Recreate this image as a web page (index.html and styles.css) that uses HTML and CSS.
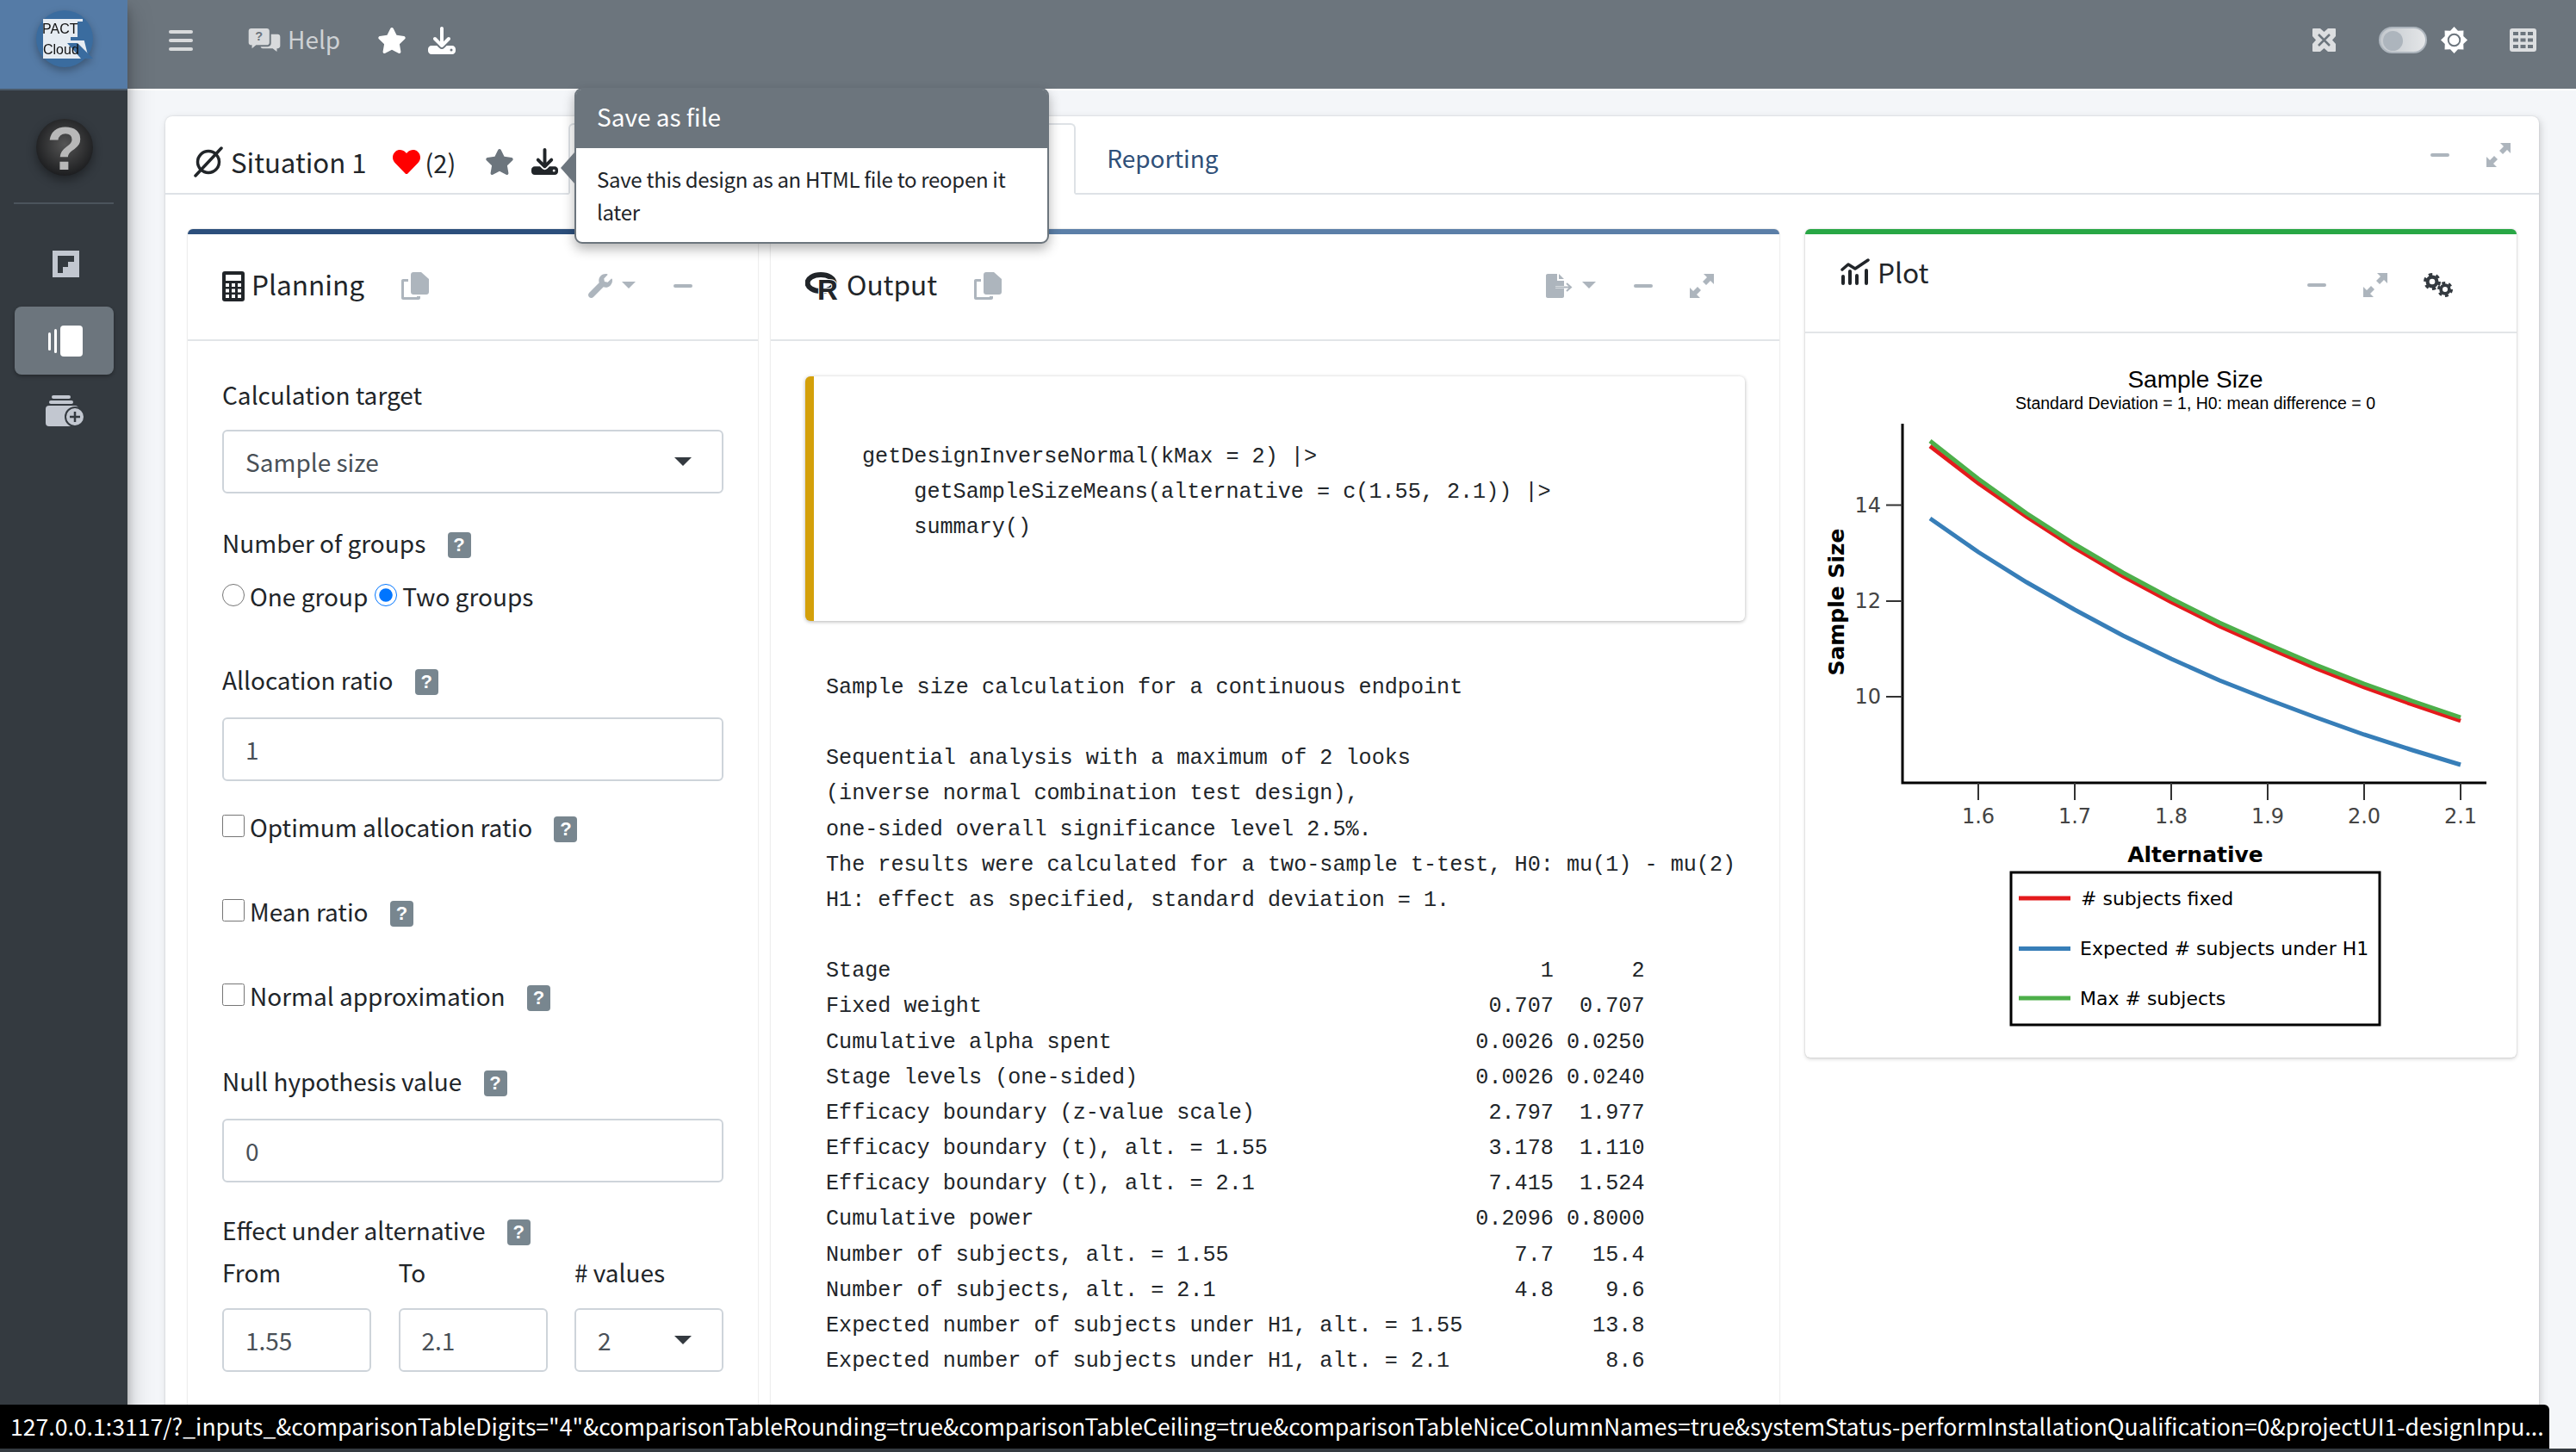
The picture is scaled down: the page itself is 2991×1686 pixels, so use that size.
FILE: index.html
```html
<!DOCTYPE html>
<html>
<head>
    <meta charset="UTF-8">
    <title>PACT Cloud</title>
    <link rel="stylesheet" href="styles.css">
</head>

<body>
    <!-- shared icons -->
    <svg class="sprite" xmlns="http://www.w3.org/2000/svg">
        <symbol id="i-star" viewBox="0 0 576 512"><path d="M259.3 17.8L194 150.2 47.9 171.5c-26.2 3.8-36.7 36.1-17.7 54.6l105.7 103-25 145.5c-4.5 26.3 23.2 46 46.4 33.7L288 439.6l130.7 68.7c23.2 12.2 50.9-7.4 46.4-33.7l-25-145.5 105.7-103c19-18.5 8.5-50.8-17.7-54.6L382 150.2 316.7 17.8c-11.7-23.6-45.6-23.9-57.4 0z"/></symbol>
        <symbol id="i-download" viewBox="0 0 512 512"><path d="M288 32c0-17.7-14.3-32-32-32s-32 14.3-32 32V274.7l-73.4-73.4c-12.5-12.5-32.8-12.5-45.3 0s-12.5 32.8 0 45.3l128 128c12.5 12.5 32.8 12.5 45.3 0l128-128c12.5-12.5 12.5-32.8 0-45.3s-32.8-12.5-45.3 0L288 274.7V32zM64 352c-35.3 0-64 28.7-64 64v32c0 35.3 28.7 64 64 64H448c35.3 0 64-28.7 64-64V416c0-35.3-28.7-64-64-64H346.5l-45.3 45.3c-25 25-65.5 25-90.5 0L165.5 352H64zm368 56a24 24 0 1 1 0 48 24 24 0 1 1 0-48z"/></symbol>
        <symbol id="i-expand" viewBox="0 0 28 28"><path d="M16 0h12v12l-4-4-5 5-4-4 5-5zM0 28V16l4 4 5-5 4 4-5 5 4 4z"/></symbol>
        <symbol id="i-copy" viewBox="0 0 32 32"><path d="M11 3c0-1.700 1.300-3 3-3h9l9 8v15c0 1.700-1.300 3-3 3H14c-1.700 0-3-1.300-3-3z"/><path d="M8 8v3H3v18h15v-1h4v2c0 1.100-.9 2-2 2H2c-1.100 0-2-.9-2-2V10c0-1.100.9-2 2-2z"/></symbol>
        <symbol id="i-cog" viewBox="0 0 24 24"><circle cx="12" cy="12" r="6.5" fill="none" stroke="currentColor" stroke-width="5"/><circle cx="12" cy="12" r="10" fill="none" stroke="currentColor" stroke-width="4" stroke-dasharray="5.2 5.27"/></symbol>
    </svg>

    <div class="app">
        <!-- sidebar -->
        <aside class="sidebar">
            <div class="brand">
                <svg class="logo" viewBox="0 0 66 90" width="66" height="90">
                    <circle cx="33" cy="45" r="33" fill="#3a6c9f"/>
                    <path d="M8 22h46v18l7 28H8z" fill="#e6ecf2"/>
                    <path d="M36 50h12l18 18H52zM48 25h9v22H40v-4h8z" fill="#3a6c9f"/>
                    <text x="7" y="39" class="logo-text">PACT</text>
                    <text x="8" y="63" class="logo-text">Cloud</text>
                </svg>
            </div>
            <div class="user-panel">
                <svg viewBox="0 0 68 90" width="68" height="90">
                    <defs>
                        <radialGradient id="ball" cx="50%" cy="45%" r="55%">
                            <stop offset="0" stop-color="#555"/>
                            <stop offset="1" stop-color="#1d1e20"/>
                        </radialGradient>
                    </defs>
                    <ellipse cx="34" cy="45" rx="33" ry="33" fill="url(#ball)"/>
                    <text x="35" y="71" class="ball-text">?</text>
                </svg>
            </div>
            <nav class="side-nav">
                <a class="side-item">
                    <svg viewBox="0 0 31 31" width="31" height="31"><path d="M0 0h31v31H0z" fill="#c2c7d0"/><path d="M6 6h19v7h-7v6h-6v7H6z" fill="#343a40"/></svg>
                </a>
                <a class="side-item active">
                    <svg viewBox="0 0 40 36" width="40" height="36"><rect x="14" y="0" width="26" height="36" rx="4" fill="#fff"/><rect x="7" y="4" width="3" height="28" rx="1.5" fill="#fff"/><rect x="0" y="8" width="3" height="21" rx="1.5" fill="#fff"/></svg>
                </a>
                <a class="side-item">
                    <svg viewBox="0 0 46 36" width="46" height="36">
                        <rect x="7" y="0" width="22" height="4" rx="2" fill="#c2c7d0"/>
                        <rect x="4" y="6" width="28" height="4" rx="2" fill="#c2c7d0"/>
                        <rect x="0" y="12" width="38" height="24" rx="4" fill="#c2c7d0"/>
                        <circle cx="34" cy="25" r="11" fill="#c2c7d0" stroke="#343a40" stroke-width="2"/>
                        <path d="M34 19v12M28 25h12" stroke="#343a40" stroke-width="2.5"/>
                    </svg>
                </a>
            </nav>
        </aside>

        <div class="main">
            <!-- top bar -->
            <header class="topbar">
                <span class="hamburger"><i></i><i></i><i></i></span>
                <svg class="help-icon" viewBox="0 0 38 28" width="38" height="27">
                    <path d="M3 0h19c1.700 0 3 1.300 3 3v14c0 1.700-1.300 3-3 3H9l-5 4v-4H3c-1.700 0-3-1.300-3-3V3c0-1.700 1.300-3 3-3z" fill="#d8dadc"/>
                    <path d="M27 7h8c1.700 0 3 1.300 3 3v11c0 1.700-1.300 3-3 3h-1v4l-5-4H17c-1.700 0-2.500-1-2.500-2H23c2.500 0 4-1.500 4-4z" fill="#d8dadc"/>
                    <text x="12.5" y="15" class="help-q">?</text>
                </svg>
                <span class="help-text">Help</span>
                <svg class="top-star"><use href="#i-star"/></svg>
                <svg class="top-download"><use href="#i-download"/></svg>

                <span class="top-right">
                    <svg class="top-expand" viewBox="0 0 27 27" width="27" height="27">
                        <rect width="27" height="27" rx="1" fill="#dcdee0"/>
                        <path d="M7 7l13 13M20 7L7 20" stroke="#6c757d" stroke-width="2.5"/>
                        <path d="M0 9l4 4.500-4 4.500zM27 9l-4 4.500 4 4.500zM9 0l4.500 4L18 0zM9 27l4.500-4 4.500 4z" fill="#6c757d"/>
                    </svg>
                    <span class="toggle"><i></i></span>
                    <svg class="top-sun" viewBox="0 0 32 32" width="31" height="31">
                        <polygon points="16,0 20.6,4.9 27.3,4.7 27.1,11.4 32,16 27.1,20.6 27.3,27.3 20.6,27.1 16,32 11.4,27.1 4.7,27.3 4.9,20.6 0,16 4.9,11.4 4.7,4.7 11.4,4.9" fill="#fff"/>
                        <circle cx="16" cy="16" r="7" fill="#fff" stroke="#6c757d" stroke-width="2"/>
                    </svg>
                    <svg class="top-grid" viewBox="0 0 31 27" width="31" height="27">
                        <rect width="31" height="27" rx="3" fill="#dcdee0"/>
                        <path d="M4 4h6v4H4zM12.500 4h6v4h-6zM21 4h6v4h-6zM4 11.500h6v4H4zM12.500 11.500h6v4h-6zM21 11.500h6v4h-6zM4 19h6v4H4zM12.500 19h6v4h-6zM21 19h6v4h-6z" fill="#6c757d"/>
                    </svg>
                </span>
            </header>

            <div class="content">
                <section class="card">
                    <div class="card-header">
                        <div class="card-lead">
                            <svg class="empty-set" viewBox="0 0 34 36" width="34" height="36">
                                <circle cx="17" cy="18" r="12.5" fill="none" stroke="#212529" stroke-width="3.5"/>
                                <path d="M2 34L32 2" stroke="#212529" stroke-width="3.5" stroke-linecap="round"/>
                            </svg>
                            <span class="card-title">Situation 1</span>
                            <svg class="heart" viewBox="0 0 512 512"><path d="M462.3 62.6C407.5 15.9 326 24.3 275.7 76.2L256 96.5l-19.7-20.3C186.1 24.3 104.5 15.9 49.7 62.6c-62.8 53.6-66.1 149.8-9.9 207.9l193.5 199.8c12.5 12.9 32.8 12.9 45.3 0l193.5-199.8c56.3-58.1 53-154.3-9.8-207.9z"/></svg>
                            <span class="likes">(2)</span>
                            <svg class="card-star"><use href="#i-star"/></svg>
                            <svg class="card-download"><use href="#i-download"/></svg>
                        </div>
                        <div class="tabs">
                            <span class="tab active"></span>
                            <span class="tab">Reporting</span>
                        </div>
                        <span class="tool-minus"></span>
                        <svg class="tool-expand"><use href="#i-expand"/></svg>
                    </div>

                    <div class="card-body">
                        <!-- planning box -->
                        <section class="box box-planning">
                            <div class="box-header">
                                <svg class="head-icon" viewBox="0 0 26 35" width="26" height="35">
                                    <rect width="26" height="35" rx="3" fill="#212529"/>
                                    <rect x="4" y="4" width="18" height="7" fill="#fff"/>
                                    <path d="M4 14h4v4H4zM11 14h4v4h-4zM18 14h4v4h-4zM4 20.500h4v4H4zM11 20.500h4v4h-4zM18 20.500h4v4h-4zM4 27h4v4H4zM11 27h4v4h-4zM18 27h4v4h-4z" fill="#fff"/>
                                </svg>
                                <span class="box-title">Planning</span>
                                <svg class="tool-copy"><use href="#i-copy"/></svg>
                                <span class="tools">
                                    <svg class="tool-wrench" viewBox="0 0 512 512"><path d="M507.73 109.1c-2.24-9.03-13.54-12.09-20.12-5.51l-74.36 74.36-67.88-11.31-11.31-67.88 74.36-74.36c6.62-6.62 3.43-17.9-5.66-20.16-47.38-11.74-99.55.91-136.58 37.93-39.64 39.64-50.55 97.1-34.05 147.2L18.74 402.76c-24.99 24.99-24.99 65.51 0 90.5 24.99 24.99 65.51 24.99 90.5 0l213.21-213.21c50.12 16.71 107.47 5.68 147.37-34.22 37.07-37.07 49.7-89.32 37.91-136.73z"/></svg>
                                    <span class="tool-caret"></span>
                                    <span class="tool-minus"></span>
                                </span>
                            </div>
                            <div class="box-body form">
                                <label class="field-label">Calculation target</label>
                                <div class="select-box">Sample size<span class="select-caret"></span></div>

                                <label class="field-label gap-m">Number of groups <span class="hint">?</span></label>
                                <div class="radio-row">
                                    <label><input type="radio" name="groups">One group</label>
                                    <label><input type="radio" name="groups" checked>Two groups</label>
                                </div>

                                <label class="field-label input-label gap-a">Allocation ratio <span class="hint">?</span></label>
                                <input class="text-input" type="text" value="1">

                                <label class="check-row gap-o"><input type="checkbox">Optimum allocation ratio <span class="hint">?</span></label>
                                <label class="check-row gap-c"><input type="checkbox">Mean ratio <span class="hint">?</span></label>
                                <label class="check-row gap-c"><input type="checkbox">Normal approximation <span class="hint">?</span></label>

                                <label class="field-label input-label gap-l">Null hypothesis value <span class="hint">?</span></label>
                                <input class="text-input" type="text" value="0">

                                <label class="field-label gap-e tight">Effect under alternative <span class="hint">?</span></label>
                                <div class="range-row">
                                    <div class="range-col">
                                        <label>From</label>
                                        <input class="text-input" type="text" value="1.55">
                                    </div>
                                    <div class="range-col">
                                        <label>To</label>
                                        <input class="text-input" type="text" value="2.1">
                                    </div>
                                    <div class="range-col">
                                        <label># values</label>
                                        <div class="select-box">2<span class="select-caret"></span></div>
                                    </div>
                                </div>
                            </div>
                        </section>

                        <!-- output box -->
                        <section class="box box-output">
                            <div class="box-header">
                                <svg class="head-icon" viewBox="0 0 40 32" width="40" height="32">
                                    <ellipse cx="18" cy="12.5" rx="15.5" ry="9.5" fill="none" stroke="#212529" stroke-width="6"/>
                                    <text x="14" y="32" class="r-mark">R</text>
                                </svg>
                                <span class="box-title">Output</span>
                                <svg class="tool-copy"><use href="#i-copy"/></svg>
                                <span class="tools">
                                    <svg class="tool-export" viewBox="0 0 31 28" width="31" height="28">
                                        <path d="M2 0h11v8h8v6H11v3h10v9c0 1.100-.9 2-2 2H2c-1.100 0-2-.9-2-2V2C0 .9.900 0 2 0zM15 0l6 6h-6z"/>
                                        <path d="M11 15.500h17M24 11l5 4.500-5 4.500" fill="none" stroke="#adb5bd" stroke-width="2"/>
                                    </svg>
                                    <span class="tool-caret"></span>
                                    <span class="tool-minus"></span>
                                    <svg class="tool-expand"><use href="#i-expand"/></svg>
                                </span>
                            </div>
                            <div class="box-body output">
                                <pre class="code-block">getDesignInverseNormal(kMax = 2) |&gt;
    getSampleSizeMeans(alternative = c(1.55, 2.1)) |&gt;
    summary()</pre>
                                <pre class="result">Sample size calculation for a continuous endpoint

Sequential analysis with a maximum of 2 looks
(inverse normal combination test design),
one-sided overall significance level 2.5%.
The results were calculated for a two-sample t-test, H0: mu(1) - mu(2)
H1: effect as specified, standard deviation = 1.

Stage                                                  1      2
Fixed weight                                       0.707  0.707
Cumulative alpha spent                            0.0026 0.0250
Stage levels (one-sided)                          0.0026 0.0240
Efficacy boundary (z-value scale)                  2.797  1.977
Efficacy boundary (t), alt. = 1.55                 3.178  1.110
Efficacy boundary (t), alt. = 2.1                  7.415  1.524
Cumulative power                                  0.2096 0.8000
Number of subjects, alt. = 1.55                      7.7   15.4
Number of subjects, alt. = 2.1                       4.8    9.6
Expected number of subjects under H1, alt. = 1.55          13.8
Expected number of subjects under H1, alt. = 2.1            8.6</pre>
                            </div>
                        </section>

                        <!-- plot box -->
                        <section class="box box-plot">
                            <div class="box-header">
                                <svg class="head-icon" viewBox="0 0 34 31" width="34" height="31">
                                    <path d="M2 13l7-6 8 5L32 2" fill="none" stroke="#212529" stroke-width="3.5" stroke-linecap="round" stroke-linejoin="round"/>
                                    <path d="M3 21v8M11 15v14M19 20v9M30 14v15" stroke="#212529" stroke-width="4" stroke-linecap="round"/>
                                </svg>
                                <span class="box-title">Plot</span>
                                <span class="tools">
                                    <span class="tool-minus"></span>
                                    <svg class="tool-expand"><use href="#i-expand"/></svg>
                                    <span class="tool-gears">
                                        <svg class="cog-big"><use href="#i-cog"/></svg>
                                        <svg class="cog-small"><use href="#i-cog"/></svg>
                                    </span>
                                </span>
                            </div>
                            <svg class="plot" viewBox="2096 387 826 837" width="826" height="837">
                                <text x="2549" y="450" class="plot-title">Sample Size</text>
                                <text x="2549" y="475" class="plot-sub">Standard Deviation = 1, H0: mean difference = 0</text>

                                <path d="M2209 492V909H2887" class="axis"/>
                                <path d="M2190 586.5H2209M2190 698H2209M2190 809H2209M2297 909V929M2409 909V929M2521 909V929M2633 909V929M2745 909V929M2857 909V929" class="tick"/>
                                <text x="2184" y="595" class="y-label">14</text>
                                <text x="2184" y="706" class="y-label">12</text>
                                <text x="2184" y="817" class="y-label">10</text>
                                <text x="2297" y="956" class="x-label">1.6</text>
                                <text x="2409" y="956" class="x-label">1.7</text>
                                <text x="2521" y="956" class="x-label">1.8</text>
                                <text x="2633" y="956" class="x-label">1.9</text>
                                <text x="2745" y="956" class="x-label">2.0</text>
                                <text x="2857" y="956" class="x-label">2.1</text>
                                <text x="2549" y="1001" class="axis-title">Alternative</text>
                                <text transform="translate(2141 699) rotate(-90)" class="axis-title">Sample Size</text>

                                <polyline class="line-red" points="2241,518 2297,561 2353,600 2409,636 2465,669 2521,699 2577,727 2633,752 2689,776 2745,798 2801,818 2857,837"/>
                                <polyline class="line-blue" points="2241,602 2297,641 2353,676 2409,708 2465,738 2521,765 2577,790 2633,812 2689,833 2745,853 2801,871 2857,888"/>
                                <polyline class="line-green" points="2241,512 2297,556 2353,596 2409,632 2465,665 2521,695 2577,723 2633,748 2689,772 2745,794 2801,814 2857,833"/>

                                <rect x="2335" y="1013" width="428" height="177" class="legend-box"/>
                                <path d="M2344 1043H2404" class="line-red"/>
                                <path d="M2344 1101.5H2404" class="line-blue"/>
                                <path d="M2344 1159H2404" class="line-green"/>
                                <text x="2416" y="1051" class="legend-text"># subjects fixed</text>
                                <text x="2415" y="1109" class="legend-text">Expected # subjects under H1</text>
                                <text x="2415" y="1167" class="legend-text">Max # subjects</text>
                            </svg>
                        </section>
                    </div>
                </section>

                <!-- popover over the save button -->
                <div class="popover">
                    <div class="popover-arrow"></div>
                    <div class="popover-title">Save as file</div>
                    <div class="popover-body">Save this design as an HTML file to reopen it later</div>
                </div>
            </div>
        </div>
    </div>

    <!-- link preview of the browser -->
    <div class="status-strip">
        <div class="status-url">127.0.0.1:3117/?_inputs_&amp;comparisonTableDigits="4"&amp;comparisonTableRounding=true&amp;comparisonTableCeiling=true&amp;comparisonTableNiceColumnNames=true&amp;systemStatus-performInstallationQualification=0&amp;projectUI1-designInpu...</div>
    </div>
</body>
</html>
```

FILE: styles.css
```css
* {
    box-sizing: border-box;
}
html, body {
    height: 100%;
}
body {
    margin: 0;
    overflow: hidden;
    font-family: "Noto Sans CJK SC", "Noto Sans", sans-serif;
    font-size: 28px;
    line-height: 42px;
    color: #212529;
    background-color: #f4f6f9;
}
.sprite {
    display: none;
}
.app {
    display: flex;
    height: 1686px;
}

/* sidebar */
.sidebar {
    position: relative;
    z-index: 2;
    flex: 0 0 148px;
    background-color: #343a40;
    box-shadow: 0 14px 28px rgba(0,0,0,0.25), 0 10px 10px rgba(0,0,0,0.22);
}
.brand {
    display: flex;
    justify-content: center;
    height: 105px;
    background-color: #557ba6;
    border-bottom: 2px solid #4a5a6a;
}
.logo {
    margin-left: 2px;
    filter: drop-shadow(0 4px 5px rgba(0,0,0,0.3));
}
.logo-text {
    font-family: "Liberation Sans", sans-serif;
    font-size: 16px;
    fill: #111;
}
.user-panel {
    display: flex;
    justify-content: center;
    height: 132px;
    padding: 21px 0 0 0;
    margin: 0 16px;
    border-bottom: 2px solid #4b545c;
}
.user-panel svg {
    margin-left: 1px;
    filter: drop-shadow(0 5px 6px rgba(0,0,0,0.4));
}
.ball-text {
    font-family: "Liberation Sans", sans-serif;
    font-weight: bold;
    font-size: 70px;
    text-anchor: middle;
    fill: #b8b8b8;
}
.side-nav {
    display: flex;
    flex-direction: column;
    padding: 53px 16px 0 17px;
}
.side-item {
    display: flex;
    align-items: center;
    justify-content: center;
    height: 79px;
    padding-left: 3px;
}
.side-item:first-child {
    height: 33px;
    margin-bottom: 33px;
}
.side-item:last-child {
    margin-top: 1px;
    height: 82px;
}
.side-item.active {
    background-color: #6c757d;
    border-radius: 8px;
    box-shadow: 0 2px 4px rgba(0,0,0,0.3);
}

/* top bar */
.main {
    flex: 1;
    min-width: 0;
}
.topbar {
    display: flex;
    align-items: center;
    height: 105px;
    padding: 0 46px 10px 48px;
    background-color: #6c757d;
    border-bottom: 2px solid #fff;
}
.hamburger {
    display: flex;
    flex-direction: column;
    gap: 6px;
    width: 28px;
}
.hamburger i {
    display: block;
    height: 4px;
    border-radius: 2px;
    background-color: #d8dadc;
}
.help-icon {
    margin-left: 64px;
}
.help-q {
    font-family: "Liberation Sans", sans-serif;
    font-weight: bold;
    font-size: 15px;
    text-anchor: middle;
    fill: #6c757d;
}
.help-text {
    margin: -3px 0 0 8px;
    font-size: 28px;
    color: #ced1d4;
}
.top-star {
    width: 34px;
    height: 30px;
    margin-left: 43px;
    fill: #fff;
}
.top-download {
    width: 32px;
    height: 32px;
    margin-left: 25px;
    fill: #fff;
}
.top-right {
    display: flex;
    align-items: center;
    margin-left: auto;
}
.toggle {
    display: block;
    width: 56px;
    height: 31px;
    margin: 0 16px 0 50px;
    padding: 3px;
    border-radius: 16px;
    border: 2px solid #adb5bd;
    background: linear-gradient(90deg, #c4c9ce, #e4e6e8);
}
.toggle i {
    display: block;
    width: 23px;
    height: 23px;
    border-radius: 50%;
    background-color: #adb5bd;
}
.top-grid {
    margin-left: 49px;
}

/* card */
.content {
    position: relative;
    height: 1581px;
    padding: 30px 43px 0 44px;
}
.card {
    height: 1600px;
    background-color: #fff;
    border-radius: 8px 8px 0 0;
    box-shadow: 0 0 2px rgba(0,0,0,0.15), 2px 3px 10px rgba(0,0,0,0.16);
}
.card-header {
    display: flex;
    align-items: center;
    height: 91px;
    padding: 0 33px;
    border-bottom: 2px solid #dee2e6;
}
.card-lead {
    display: flex;
    align-items: center;
    align-self: stretch;
    padding-top: 16px;
}
.card-title {
    margin-left: 9px;
    font-size: 31.2px;
}
.heart {
    width: 32px;
    height: 32px;
    margin-left: 30px;
    fill: #ff0000;
}
.likes {
    margin-left: 6px;
    font-size: 29px;
}
.card-star {
    width: 34px;
    height: 30px;
    margin-left: 34px;
    fill: #6c757d;
}
.card-download {
    width: 33px;
    height: 31px;
    margin-left: 19px;
    fill: #212529;
}
.tabs {
    display: flex;
    align-self: stretch;
    flex: 1;
    margin-left: 11px;
}
.tab {
    padding-top: 27px;
    font-size: 28px;
    color: #2f5079;
}
.tab.active {
    width: 589px;
    margin: 8px 36px -2px 0;
    background-color: #fff;
    border: 2px solid #dee2e6;
    border-bottom-color: #fff;
    border-radius: 6px 6px 0 0;
}
.tool-minus {
    display: block;
    width: 22px;
    height: 4px;
    border-radius: 2px;
    background-color: #adb5bd;
}
.tool-expand {
    flex: none;
    width: 28px;
    height: 28px;
    fill: #adb5bd;
}

/* boxes */
.card-body {
    display: flex;
    align-items: flex-start;
    padding: 40px 26px 0;
}
.box {
    flex: none;
    background-color: #fff;
    border-top: 6px solid #5b7fa8;
    border-radius: 6px;
    box-shadow: 0 0 2px rgba(0,0,0,0.25);
}
.box-planning {
    width: 662px;
    height: 1500px;
    border-top-color: #2c4f7c;
}
.box-output {
    width: 1171px;
    height: 1500px;
    margin-left: 15px;
}
.box-plot {
    width: 826px;
    height: 962px;
    margin-left: 30px;
    border-top-color: #28a745;
    box-shadow: 0 0 2px rgba(0,0,0,0.2), 0 2px 4px rgba(0,0,0,0.15);
}
.box-header {
    display: flex;
    align-items: center;
    height: 124px;
    padding: 0 40px 2px;
    border-bottom: 2px solid #e2e5e8;
}
.box-title {
    margin: -6px 0 0 8px;
    font-size: 31.6px;
}
.tool-copy {
    width: 32px;
    height: 32px;
    margin-left: 43px;
    fill: #adb5bd;
}
.tools {
    display: flex;
    align-items: center;
    margin-left: auto;
    margin-right: 36px;
}
.tool-wrench {
    width: 28px;
    height: 28px;
    fill: #adb5bd;
}
.tool-export {
    fill: #adb5bd;
}
.tool-caret {
    width: 0;
    height: 0;
    margin: -2px 0 0 11px;
    border-left: 8px solid transparent;
    border-right: 8px solid transparent;
    border-top: 8px solid #adb5bd;
}
.tool-caret + .tool-minus {
    margin-left: 44px;
}
.tool-minus + .tool-expand {
    margin-left: 43px;
}

/* plot header has a thinner band */
.box-plot .box-header {
    height: 115px;
    padding: 0 41px;
}
.box-plot .head-icon {
    margin-top: -26px;
}
.box-plot .box-title {
    margin-top: -28px;
    margin-left: 9px;
}
.box-plot .tools {
    margin-right: 33px;
    margin-top: 4px;
}
.tool-gears {
    position: relative;
    width: 34px;
    height: 28px;
    margin-left: 42px;
    color: #343a40;
}
.cog-big {
    position: absolute;
    left: 0;
    top: 0;
    width: 20px;
    height: 20px;
}
.cog-small {
    position: absolute;
    left: 16px;
    top: 10px;
    width: 18px;
    height: 18px;
}

/* form */
.form {
    padding: 41px 40px 0;
}
.field-label {
    display: block;
    margin-bottom: 20px;
}
.field-label.input-label {
    margin-bottom: 23px;
}
.field-label.tight {
    margin-bottom: 7px;
}
.gap-m {
    margin-top: 36px;
}
.gap-a {
    margin-top: 55px;
}
.gap-o {
    margin-top: 32px;
}
.gap-c {
    margin-top: 56px;
}
.gap-l {
    margin-top: 57px;
}
.gap-e {
    margin-top: 34px;
}
.hint {
    display: inline-block;
    width: 27px;
    height: 30px;
    margin-left: 19px;
    border-radius: 4px;
    background-color: #78868f;
    color: #fff;
    font-family: "Liberation Sans", sans-serif;
    font-size: 22px;
    font-weight: bold;
    line-height: 30px;
    text-align: center;
    vertical-align: 2px;
}
.select-box,
.text-input {
    display: block;
    width: 100%;
    height: 74px;
    padding: 0 25px;
    background-color: #fff;
    border: 2px solid #ced4da;
    border-radius: 6px;
    font: inherit;
    color: #495057;
}
.select-box {
    display: flex;
    align-items: center;
    justify-content: space-between;
}
.select-caret {
    width: 0;
    height: 0;
    margin-right: 10px;
    border-left: 10px solid transparent;
    border-right: 10px solid transparent;
    border-top: 10px solid #343a40;
}
.radio-row {
    display: flex;
    gap: 8px;
}
.radio-row input,
.check-row input {
    width: 26px;
    height: 26px;
    margin: 0 6px 0 0;
    vertical-align: 0;
}
.check-row {
    display: block;
}
.range-row {
    display: flex;
    justify-content: space-between;
}
.range-col {
    width: 173px;
}
.range-col label {
    display: block;
    margin-bottom: 21px;
}

/* output */
.output {
    padding: 41px 40px 0 40px;
}
.code-block {
    height: 284px;
    margin: 0;
    padding: 73px 0 0 56px;
    background-color: #fff;
    border-left: 10px solid #d4a00a;
    border-radius: 6px;
    box-shadow: 0 1px 4px rgba(0,0,0,0.3);
    font-family: "Liberation Mono", monospace;
    font-size: 25.15px;
    line-height: 41px;
    color: #212529;
}
.result {
    margin: 57px 0 0 24px;
    font-family: "Liberation Mono", monospace;
    font-size: 25.15px;
    line-height: 41.16px;
    color: #212529;
}

/* plot */
.plot {
    display: block;
}
.plot-title {
    font-family: "Liberation Sans", sans-serif;
    font-size: 28px;
    text-anchor: middle;
}
.plot-sub {
    font-family: "Liberation Sans", sans-serif;
    font-size: 19.5px;
    text-anchor: middle;
}
.axis {
    fill: none;
    stroke: #000;
    stroke-width: 3;
}
.tick {
    fill: none;
    stroke: #333;
    stroke-width: 2;
}
.y-label,
.x-label {
    font-family: "DejaVu Sans", sans-serif;
    font-size: 24px;
    fill: #444;
}
.y-label {
    text-anchor: end;
}
.x-label {
    text-anchor: middle;
}
.axis-title {
    font-family: "DejaVu Sans", sans-serif;
    font-size: 25px;
    font-weight: bold;
    text-anchor: middle;
}
.line-red,
.line-blue,
.line-green {
    fill: none;
    stroke-width: 5;
}
.line-red {
    stroke: #e41a1c;
}
.line-blue {
    stroke: #377eb8;
}
.line-green {
    stroke: #4daf4a;
}
.legend-box {
    fill: #fff;
    stroke: #000;
    stroke-width: 3;
}
.legend-text {
    font-family: "DejaVu Sans", sans-serif;
    font-size: 22px;
}
.r-mark {
    font-family: "Liberation Sans", sans-serif;
    font-size: 33px;
    font-weight: bold;
    fill: #212529;
    stroke: #fff;
    stroke-width: 2px;
    paint-order: stroke;
}

/* popover */
.popover {
    position: absolute;
    left: 519px;
    top: -3px;
    width: 551px;
    height: 181px;
    z-index: 3;
    background-color: #fff;
    border: 2px solid #6c757d;
    border-radius: 9px;
    box-shadow: 0 6px 14px rgba(0,0,0,0.3);
}
.popover-arrow {
    position: absolute;
    left: -18px;
    top: 73px;
    border-top: 18px solid transparent;
    border-bottom: 18px solid transparent;
    border-right: 16px solid #6c757d;
}
.popover-title {
    height: 68px;
    padding: 0 24px;
    background-color: #6c757d;
    border-radius: 6px 6px 0 0;
    color: #fff;
    font-size: 28px;
    line-height: 62px;
}
.popover-body {
    padding: 17px 24px;
    font-size: 24px;
    letter-spacing: -0.3px;
    line-height: 38px;
}

/* browser link preview */
.status-strip {
    position: fixed;
    left: 0;
    right: 0;
    bottom: 0;
    z-index: 5;
    padding-bottom: 4px;
}
.status-strip::after {
    content: "";
    position: absolute;
    left: 0;
    right: 0;
    bottom: 0;
    height: 4px;
    background-color: #343a40;
}
.status-url {
    width: 2960px;
    height: 51px;
    padding: 0 8px 0 12px;
    overflow: hidden;
    background-color: #000;
    border-radius: 0 6px 0 0;
    color: #fff;
    font-size: 26.6px;
    line-height: 50px;
    white-space: nowrap;
}
```
